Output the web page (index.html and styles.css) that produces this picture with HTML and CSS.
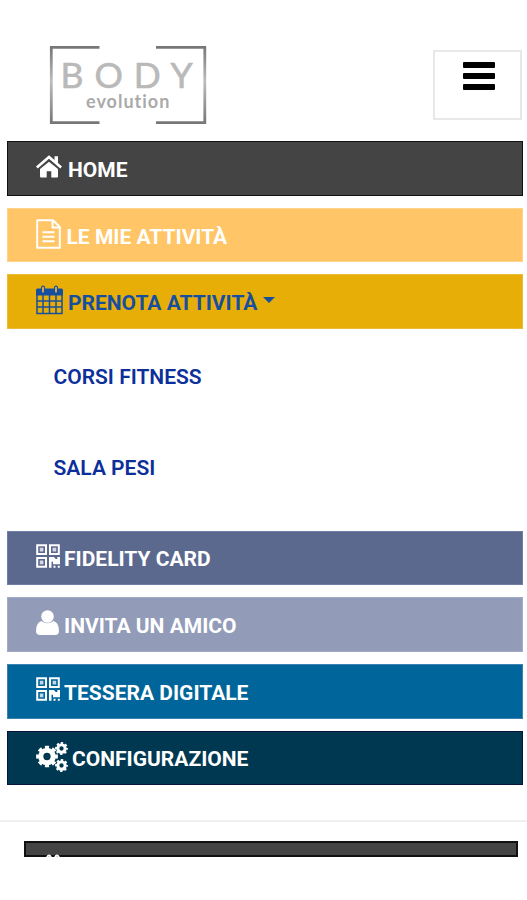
FILE: index.html
```html
<!DOCTYPE html>
<html lang="it">
<head>
<meta charset="utf-8">
<title>Body Evolution</title>
<link rel="stylesheet" href="styles.css">
</head>
<body>
<svg class="defs" width="0" height="0" aria-hidden="true">
  <symbol id="qr" viewBox="0 0 24 24">
    <path fill="none" stroke="currentColor" stroke-width="2" d="M1.200 1.200h8.800v8.800H1.200zM14 1.200h8.800v8.800H14zM1.200 14h8.800v8.800H1.200z"/>
    <path fill="currentColor" opacity=".75" d="M3.800 3.800h3.600v3.600H3.800zM16.600 3.800h3.600v3.600h-3.600zM3.800 16.600h3.600v3.600H3.800z"/>
    <path fill="currentColor" d="M13 13h4.800l2 2h1.500v-2H24v7.200h-7v-2.500h-1.500v6H13zM17.500 21.700h2v2h-2zM21.800 21.700h2v2h-2z"/>
  </symbol>
  <symbol id="gear" viewBox="-12 -12 24 24">
    <circle r="6.800" fill="none" stroke="currentColor" stroke-width="5.600"/>
    <circle r="10.200" fill="none" stroke="currentColor" stroke-width="3.400" pathLength="16" stroke-dasharray="1.100 .9" stroke-dashoffset=".55"/>
  </symbol>
</svg>
<header class="top">
  <div class="logo">
    <svg class="frame" viewBox="0 0 158 80"><defs><linearGradient id="metal" x2="0" y2="1"><stop offset="0" stop-color="#777"/><stop offset=".45" stop-color="#bdbdbd"/><stop offset="1" stop-color="#777"/></linearGradient></defs><path fill="none" stroke="url(#metal)" stroke-width="2.800" d="M50.500 2.300H2.300v75.400h48.200M107 2.300h48.800v75.400H107"/></svg>
    <div class="brand">BODY</div>
    <div class="sub">evolution</div>
  </div>
  <button class="toggle" aria-label="Menu"><span></span><span></span><span></span></button>
</header>
<nav class="menu">
  <a class="item home"><svg class="i-home" viewBox="0 0 26 23"><path fill="currentColor" d="M4 14l9-7.300L22 14v7.500q0 1-1 1h-5.700v-6.300h-4.600v6.300H5q-1 0-1-1z"/><path fill="none" stroke="currentColor" stroke-width="2.700" d="M.8 12.500L13 2l12.200 10.500"/><path fill="currentColor" d="M18.500 1.200H22v8.500l-3.500-3z"/></svg><span>HOME</span></a>
  <a class="item activities"><svg class="i-file" viewBox="0 0 25 30"><path fill="none" stroke="currentColor" stroke-width="2" stroke-linejoin="round" d="M1.200 1.200H17l6.800 6.800v20.800H1.200zM16.500 1.500v7h7M6.500 13.200h12M6.500 17.700h12M6.500 22.200h12"/></svg><span>LE MIE ATTIVITÀ</span></a>
  <a class="item book"><svg class="i-cal" viewBox="0 0 27 30"><path fill="none" stroke="currentColor" stroke-width="1.500" d="M1 8v20.500h25V8M7 10v18M13.500 10v18M20 10v18M1 16h25M1 22h25"/><path fill="currentColor" d="M0 10.500V5q0-1.500 1.500-1.500h24Q27 3.500 27 5v5.500z"/><g fill="none" stroke="currentColor" stroke-width="4" stroke-linecap="round"><path d="M7 2.500v4M20 2.500v4"/></g><path fill="none" stroke="#e9bd45" stroke-width="1.700" stroke-linecap="round" d="M7 2.700v4M20 2.700v4"/></svg><span>PRENOTA ATTIVITÀ</span><i class="caret"></i></a>
  <div class="submenu"><a class="fitness">CORSI FITNESS</a><a class="pesi">SALA PESI</a></div>
  <a class="item card"><svg class="i-qr"><use href="#qr"/></svg><span>FIDELITY CARD</span></a>
  <a class="item invite"><svg class="i-user" viewBox="0 0 23 25"><path fill="currentColor" d="M5.500 11Q0 12.500 0 21q0 4 4 4h15q4 0 4-4 0-8.500-5.500-10-6 4.500-12 0z"/><circle cx="11.500" cy="6.500" r="6.300" fill="currentColor"/></svg><span>INVITA UN AMICO</span></a>
  <a class="item digital"><svg class="i-qr"><use href="#qr"/></svg><span>TESSERA DIGITALE</span></a>
  <a class="item config"><svg class="i-gears" viewBox="0 0 32 30"><use href="#gear" x="0" y="3.500" width="22" height="22"/><use href="#gear" x="19" y="0" width="13" height="13"/><use href="#gear" x="19" y="17" width="13" height="13"/></svg><span>CONFIGURAZIONE</span></a>
</nav>
<main class="content">
  <div class="panel"><svg viewBox="0 0 14 3"><path fill="none" stroke="#fff" stroke-width="2" d="M1 3q2-3 4 0M9 3q2-3 4 0"/></svg></div>
</main>
</body>
</html>
```
FILE: styles.css
```css
* { box-sizing: border-box; }
body {
  margin: 0;
  background: #fff;
  font-family: Roboto, sans-serif;
  overflow: hidden;
}
svg { display: block; flex: none; }
.defs { position: absolute; }
.top {
  height: 141px;
  padding: 45px 5px 0 49px;
  display: flex;
  justify-content: space-between;
}
.logo {
  position: relative;
  width: 158px;
  height: 80px;
  padding-top: 16px;
  color: #b9b9b9;
}
.frame { position: absolute; inset: 0; width: 158px; height: 80px; }
.brand {
  font: 400 35.500px/27px Lato, sans-serif;
  letter-spacing: 11px;
  padding-left: 11.500px;
  white-space: nowrap;
  -webkit-text-stroke: .6px #b9b9b9;
}
.sub {
  font: 700 18px/20px Lato, sans-serif;
  letter-spacing: 1px;
  padding-left: 37px;
  margin-top: 3px;
  color: #aaa;
}
.toggle {
  width: 89px;
  height: 70px;
  margin-top: 5px;
  padding: 10px 0 0 28px;
  background: #fff;
  border: 2px solid #e8e8e8;
  display: flex;
  flex-direction: column;
  align-items: flex-start;
  gap: 5px;
}
.toggle span { width: 32px; height: 6px; background: #000; border-radius: 1px; }
.menu {
  padding: 0 4.500px 0 7px;
  display: flex;
  flex-direction: column;
  gap: 12px;
}
.item {
  height: 54.700px;
  padding-left: 28px;
  display: flex;
  align-items: flex-start;
  color: #fff;
  border: 1px solid transparent;
  font-weight: 700;
  font-size: 21px;
  line-height: 24px;
  white-space: nowrap;
}
.item span { margin-top: 16px; }
.home { background: #444; border-color: #111; }
.activities { background: #ffc566; border-color: #ffd38a; }
.book { background: #e8ae08; border-color: #edbb38; color: #174fa0; }
.card { background: #5c698f; border-color: #717da6; }
.invite { background: #929bb8; border-color: #a3abc7; }
.digital { background: #00659a; border-color: #3b82b2; }
.config { background: #003852; border-color: #08123f; }
.card span, .config span { margin-top: 15px; }
.i-home { width: 26px; height: 23px; margin: 13px 6px 0 0; }
.i-file { width: 25px; height: 30px; margin: 10px 5.500px 0 0; }
.i-cal { width: 27px; height: 30px; margin: 10px 5px 0 0; }
.i-qr { width: 24px; height: 24px; margin: 12px 4px 0 0; }
.i-user { width: 23px; height: 25px; margin: 12px 5px 0 0; }
.i-gears { width: 32px; height: 30px; margin: 10px 4px 0 0; }
.caret {
  margin: 22px 0 0 6px;
  border: 6.500px solid transparent;
  border-top-color: #174fa0;
  border-bottom: 0;
}
.submenu {
  height: 177.600px;
  padding: 24px 0 0 46.500px;
  display: flex;
  flex-direction: column;
  gap: 67px;
  color: #0c2f9a;
  font-weight: 600;
  font-size: 21px;
  line-height: 24px;
}
.content {
  margin-top: 35px;
  padding: 19px 9px 0 24px;
  border-top: 2px solid #efefef;
}
.panel {
  height: 16px;
  padding: 11px 0 0 20px;
  background: #444;
  border: 2px solid #111;
}
.panel svg { width: 14px; height: 3px; }
```
